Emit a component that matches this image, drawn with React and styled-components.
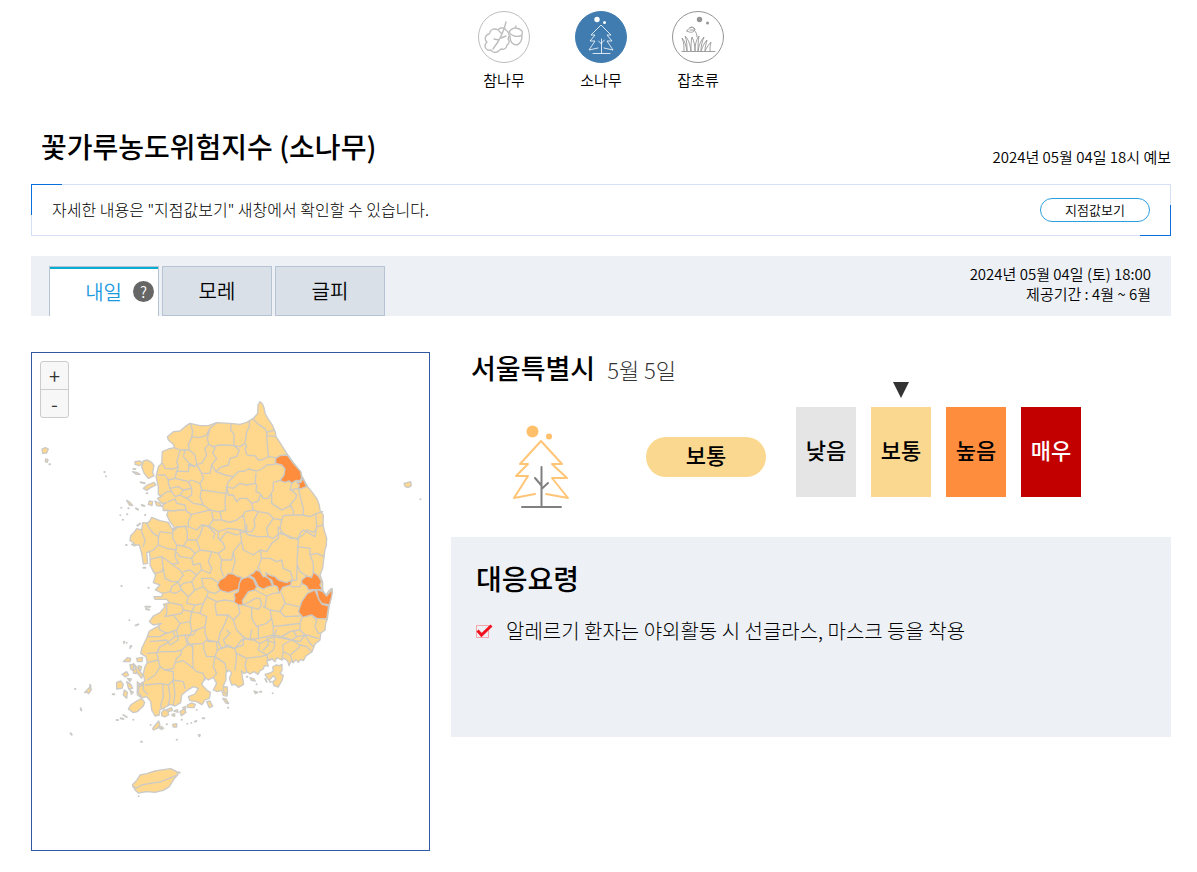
import React, { useState } from "react";
import styled, { createGlobalStyle, css } from "styled-components";

// 꽃가루 종류
const plants = [
  { id: "oak", name: "참나무" },
  { id: "pine", name: "소나무" },
  { id: "weed", name: "잡초류" },
];

const days = ["내일", "모레", "글피"];

// 위험 단계
const levels = [
  { name: "낮음", bg: "#e5e5e5", color: "#000" },
  { name: "보통", bg: "#fad88f", color: "#000" },
  { name: "높음", bg: "#ff8d3e", color: "#000" },
  { name: "매우", bg: "#c30000", color: "#fff" },
];

// 육지 해안선
const mainland =
  "M690 170L697 176 702 188 705 205 715 222 728 242 736 262 738 275 750 293 772 328 790 353 812 380 816 395 822 405 833 425 845 440 860 460 868 480 870 495 880 510 879 540 884 560 890 580 889 600 885 615 882 635 878 670 870 690 878 710 878 735 888 750 896 738 905 730 907 745 900 760 898 780 895 800 892 822 887 835 885 855 872 865 870 885 855 897 846 920 828 933 820 947 812 943 805 952 798 944 790 953 783 948 777 962 773 948 762 940 755 945 740 938 735 950 726 942 710 947 715 963 703 962 700 972 690 977 684 988 672 980 660 987 650 980 643 986 634 977 638 1000 641 1018 625 1027 615 1018 605 1020 598 1000 605 983 597 976 588 982 588 1005 580 1022 593 1037 591 1053 580 1052 575 1036 562 1040 550 1035 560 1015 550 997 535 1005 526 998 515 1018 530 1035 541 1042 538 1060 525 1065 516 1079 500 1070 480 1067 475 1055 495 1047 505 1030 490 1025 470 1037 455 1050 452 1073 435 1083 420 1078 410 1084 402 1090 390 1093 388 1110 375 1113 365 1095 362 1070 350 1055 339 1058 328 1055 322 1040 329 1020 344 1008 340 985 345 965 352 953 348 935 332 925 336 908 352 875 358 858 385 843 395 835 370 840 358 830 370 813 390 803 405 785 400 778 418 773 410 763 375 763 372 755 395 755 398 745 376 735 390 720 370 713 377 690 370 680 360 660 361 645 358 620 350 623 353 655 340 657 335 625 328 600 315 600 308 591 300 587 302 572 312 562 320 551 335 555 338 533 352 534 360 527 365 517 390 527 415 532 425 550 435 550 420 530 410 510 415 497 400 497 398 480 410 473 395 475 382 460 395 455 385 448 385 425 378 395 385 365 395 355 397 320 415 312 433 308 430 298 415 285 412 275 430 260 450 258 465 245 480 235 510 242 535 242 560 233 600 235 630 238 650 232 670 220 683 205 684 180Z";

// 시군구 경계 (북부, 중부, 남부)
const northBorders =
  "M183 88L188 110 184 130 175 148 178 165 195 180 200 208M188 125L205 128 228 122 240 100 260 83M240 100L232 130 236 148 250 155 268 150 290 150 312 152M303 86L302 105 312 118 312 152 330 155 345 145 350 155M358 80L358 95 350 110 345 145M370 72L385 88 405 100 410 112 432 105M410 112L410 122 437 125M410 122L412 150 415 185 395 195 385 195 375 182 360 182 350 178 345 160 350 155M415 185L437 188 472 178M312 152L328 165 320 185 300 190 295 210 270 218 258 230 245 210 260 190 248 175 255 160 250 155M236 148L225 160 230 180 215 205 200 208 195 215 175 210M258 230L285 240 310 245 325 230 345 228 355 222 380 228 395 222 410 210 435 208 437 188M310 245L295 260 290 275 310 280 330 265 350 270 375 265 378 235M245 210L240 235 215 235 200 208M215 235L220 250 210 265 185 255 175 260M462 240L455 255 430 262 430 285 415 310 400 310 390 295 378 290 380 270 375 265M485 265L480 285 505 280M505 280L512 310 520 340 520 360 490 360 490 345 480 330 497 310 500 300 485 285M425 300L425 325 440 335 455 345 475 335 485 335M520 360L540 365 560 355 578 350M490 360L460 362 455 375 430 370 415 355 385 350 370 345 365 325 385 318 390 302M365 325L350 310 330 310 320 320 310 300 295 300 290 275 285 320 287 345 270 350 275 375 300 382 320 375 340 360 345 350 370 345M210 265L215 285 250 290 285 295M215 285L210 305 220 330 240 345 262 350 270 350M85 240L105 240 115 255 135 250 175 260 185 280 160 285 145 275 120 280 115 265 115 255M133 158L150 165 145 185 140 200 145 215 130 222 105 220 98 205M150 165L165 165 178 165M165 165L160 185 178 205 175 230 140 228 145 215M178 205L195 215M140 228L135 250M90 305L110 290 125 290 120 280M125 290L135 305 150 300 160 285M150 300L170 310 185 300 185 280M170 310L190 325 220 330M115 320L135 312 140 325 165 330 170 350 185 358 210 352 240 345M105 345L130 348 150 345 168 345M185 358L175 380 175 395 140 395 128 405M175 395L200 405 215 390 235 395 250 375 245 350M250 375L270 375M235 395L255 415 250 430M340 360L345 385 345 410 320 420 290 410 270 435M345 410L365 410 375 395 372 375 385 350M455 375L450 400 455 410 430 430 415 425 410 400 430 370M345 410L355 420 385 425 415 425M455 410L480 430 500 430 520 420 530 405 550 412 560 400 558 360";

const middleBorders =
  "M218 125L232 112 255 108 262 125 262 150 250 168 230 165 218 145 218 120M125 125L135 150 130 170M140 100L148 115 160 130 175 140 180 125 218 130M175 140L175 165 160 180 148 185M175 165L200 175 228 180 230 165M228 180L225 200 235 220 215 222 200 210 185 200 160 205 150 210M185 200L190 235 185 245 165 250M215 222L240 240 250 255 235 275 215 275 195 265 190 235M262 150L290 150 300 135 310 105 330 110 355 125M290 150L300 180 285 190 270 175 250 168M300 180L335 185 355 190 375 175 370 160 355 145 355 125 385 115 420 120M355 190L365 210 395 210 400 185 425 155 420 120 440 125 440 105M425 155L430 180 460 195 480 180 500 185 515 160 535 145 535 110M400 185L405 215 395 250M480 180L485 205 475 230 480 245M485 205L510 205 530 215 545 210 550 235 572 245 578 270M535 130L560 135 595 150 600 130 610 120 645 140 650 110 670 105M595 150L592 200 590 270 578 272M592 225L600 245 620 258M592 170L630 175 630 195 650 190 672 200M630 195L640 220 640 247M285 190L275 205 280 225 300 220 305 240 290 255 270 240 250 245M275 205L240 200 228 185M305 240L330 250 335 235 325 215 335 185M365 210L362 235 370 258M290 255L275 275 285 300 310 290 305 265 335 265 355 278M310 290L325 305 345 310 360 302M275 275L250 280 240 290 235 275M188 310L210 305 215 290 235 275M210 305L225 310 245 300 240 290M245 300L265 320 285 300M265 320L260 340 285 345 275 365 250 360 245 345 208 338M285 345L310 340 320 320 325 305M310 340L300 370 275 365M320 320L350 335 375 330 402 335M345 345L350 375 385 375 400 390 420 370 415 345M350 335L345 345M430 345L450 335 465 325 480 325 485 345 475 358 455 352 430 345M465 300L500 318 520 310 538 308M500 318L495 350M545 310L555 340 595 350M575 290L600 290 608 275M555 340L540 365 510 360 490 350M540 365L555 380 600 378M510 360L515 385 500 400 470 410 455 385 455 352M200 345L200 370 195 380 220 375 245 370 250 360M220 375L240 400 230 420 200 430 180 420 175 408M240 400L270 395 275 365M270 395L275 425 260 450 275 470M300 370L320 380 315 410 290 420 275 425M385 375L375 400 360 430 355 455 325 455 315 430 315 410M400 390L410 420 430 440 450 450 475 445 475 410M515 385L520 410 560 405 600 400 605 385M520 410L520 435 545 440 570 425 600 420 600 400M640 380L650 390 645 410 655 430 662 430M600 420L615 435 600 455 575 450 545 440M475 445L500 440 520 435M500 440L505 465 490 480M230 420L235 450 210 465 200 450 150 455M355 455L365 475 385 465 400 475 430 465 430 440M615 435L630 460 640 470";

const southBorders =
  "M262 20L300 20 320 8M262 70L290 68 300 50 320 40 345 20 340 5M345 20L375 15 382 45 365 60 345 65 310 65 290 68 295 90 262 98M382 45L400 42 430 40 440 30 470 35 472 60 465 80 440 80 432 60 430 40M375 15L400 15 410 0M398 42L398 80 400 115 370 92 345 98 340 115 315 120 300 110 295 90M345 98L350 85 362 75 365 60M315 120L340 125 340 150 325 165 300 160 256 165M300 110L285 135 262 150M340 150L370 155 375 175M400 115L410 125 430 130 435 150M308 165L310 200 302 225 305 235M325 165L330 200 325 225M340 155L345 190 340 225M465 80L495 100 500 125M465 80L460 110 470 130 460 142M472 60L500 50 525 55 530 80 525 120M500 50L490 30 510 10 500 0M530 70L560 85 600 80 620 75 625 92 640 86M560 85L555 105 560 125M525 55L545 30 570 25 600 40 595 60 620 75M570 25L575 0M600 40L620 30 645 40 640 60 620 75M645 40L640 20 650 0M620 30L640 20 670 25 695 30 710 20 700 0M695 30L720 45 715 55 690 75 670 65 668 45 695 30M690 75L700 98M720 45L740 50 755 65M710 20L740 15 775 25M670 65L665 90M250 160L250 180 262 192";

// "높음" 지역
const highNorth =
  "M437 190L450 182 472 180 490 205 512 230 515 250 508 258 498 256 485 265 478 258 465 262 450 257 462 240 465 222 455 210 437 205ZM500 262L513 262 518 248 524 262 530 275 515 280 505 282 508 270Z";

const highMiddle =
  "M352 285L360 270 372 264 385 250 400 252 410 258 425 262 418 280 415 298 400 303 385 308 370 304 360 300ZM425 267L445 260 460 268 470 290 465 300 445 305 435 320 427 332 430 345 415 345 402 335 405 325 402 312 415 305 418 280ZM447 255L460 250 468 240 480 245 490 260 500 260 510 270 518 288 505 290 490 297 475 290 462 265ZM497 248L510 256 525 260 535 270 560 278 575 270 572 285 548 292 538 310 532 290 520 285 515 270 500 262ZM605 270L620 258 635 262 640 247 655 258 665 275 660 285 668 300 650 298 625 300 620 288 605 280ZM650 298L668 305 680 318 697 297 695 320 688 345 665 340 655 325ZM622 310L645 300 655 325 665 342 686 348 680 387 650 385 635 375 608 382 595 365 600 350 605 335Z";

// 섬
const islands = [
  "M340 348L352 345 365 352 372 362 368 382 372 393 355 400 343 386 335 365Z",
  "M315 350L330 348 338 354 328 362 315 358ZM308 380L320 382 330 388 318 388ZM340 430L352 420 372 412 378 420 362 428 350 436Z",
  "M358 468L368 470 366 482 355 478ZM375 468L388 474 396 484 380 482Z",
  "M290 466L300 472 308 482 298 480Z",
  "M36 312L46 308 55 312 50 324 38 325ZM47 342L54 344 52 352 46 350Z",
  "M1122 415L1142 410 1144 422 1134 428 1125 424Z",
  "M295 1092L302 1080 320 1068 335 1060 344 1072 340 1083 322 1100 310 1103Z",
  "M322 1010L330 1020 324 1040 335 1055 322 1050ZM325 1022L337 1012 337 1022Z",
  "M280 950L292 938 302 940 300 950ZM300 958L312 960 308 976 302 972ZM320 940L338 937 336 950 322 950Z",
  "M276 988L290 980 296 990 286 996ZM310 972L322 974 318 986 310 984ZM325 962L335 965 332 976 326 972Z",
  "M260 1012L272 1008 280 1018 276 1030 260 1032ZM290 1010L302 1018 308 1030 296 1032ZM283 1035L292 1042 290 1060 280 1050ZM300 1035L310 1042 304 1048ZM292 1000L304 1002 300 1010ZM310 955L322 968 338 990 335 1000 322 984Z",
  "M395 1102L402 1094 414 1098 416 1110 404 1116 395 1112ZM410 1094L424 1088 428 1096 416 1100ZM426 1108L434 1106 434 1114 426 1112ZM432 1098L442 1094 444 1102ZM450 1100L462 1092 468 1102 454 1112ZM458 1088L468 1084 466 1094Z",
  "M472 1080L484 1074 496 1078 492 1088 474 1088Z",
  "M368 1150L376 1140 386 1128 390 1140 382 1150 370 1155ZM386 1148L396 1144 396 1154ZM428 1138L440 1136 440 1146 430 1146Z",
  "M530 1070L540 1068 548 1084 538 1088ZM578 1060L588 1062 596 1076 588 1074Z",
  "M705 988L720 984 730 978 728 966 738 960 748 962 756 958 756 976 750 985 760 992 755 1008 745 1026 732 1022 728 1010 738 1002 730 992 718 1006 712 1000Z",
  "M580 1026L592 1026 592 1048 582 1042ZM660 998L672 1002 676 1008 664 1006ZM672 1038L684 1042 676 1046Z",
  "M168 1038L180 1026 184 1034 176 1046Z",
  "M307 1320L320 1306 330 1290 350 1286 375 1278 400 1274 422 1271 440 1280 444 1288 432 1302 418 1325 400 1336 375 1342 350 1340 325 1344 316 1336Z",
];

const islets =
  "M58 358h2M223 381h1M228 394h0M274 488h0M271 511h0M278 524h1M291 508h1M295 490h1M318 490l6 4M335 480l8 3M345 510h1M310 372h6M332 412l12 3M350 445h2M288 600h2M306 598l8 4M330 536l-8 6M340 668h6M274 723h1M355 728h1M346 785l14 0M348 792l10 2M298 826h0M325 838l-8 3M282 890h1M304 903l-4 6M290 893h0M302 903h0M282 894h0M135 1032h1M180 1020l2 6M165 1042h3M248 1048h5M152 1090l2 6M122 1165l3 4M260 1125h4M272 1120l8 2M280 1110l10 6M310 1124h0M333 1190h3M410 1138h1M440 1184h1M506 1170h4M508 1174h0M455 1124h1M472 1136h0M484 1134h0M495 1130l4-2M500 1095h0M518 1120h5M362 1140h0M594 1088h1M650 995h2M680 1018h0M690 1040h4M728 1045h0M445 1282l4 1M326 1354h0M400 1150h0M706 1002l4 8M720 1010h3M1171 463h0";

const App = () => {
  const [day, setDay] = useState(0);
  const [plant, setPlant] = useState("pine");

  return (
    <Wrap>
      <GlobalStyle />
      <PlantNav>
        {plants.map((item) => (
          <PlantButton key={item.id} type="button" onClick={() => setPlant(item.id)}>
            <PlantIcon id={item.id} active={plant === item.id} />
            <span>{item.name}</span>
          </PlantButton>
        ))}
      </PlantNav>

      <TitleRow>
        <h1>꽃가루농도위험지수 (소나무)</h1>
        <p>2024년 05월 04일 18시 예보</p>
      </TitleRow>

      <InfoBox>
        <p>자세한 내용은 "지점값보기" 새창에서 확인할 수 있습니다.</p>
        <PointButton type="button">지점값보기</PointButton>
      </InfoBox>

      <TabBar>
        <Tabs>
          {days.map((name, index) => (
            <Tab key={name} type="button" $active={day === index} onClick={() => setDay(index)}>
              {name}
              {index === 0 && <Help>?</Help>}
            </Tab>
          ))}
        </Tabs>
        <Period>
          <p>2024년 05월 04일 (토) 18:00</p>
          <p>제공기간 : 4월 ~ 6월</p>
        </Period>
      </TabBar>

      <Content>
        <MapPanel>
          <KoreaMap />
          <ZoomControl>
            <button type="button" aria-label="확대">+</button>
            <button type="button" aria-label="축소">-</button>
          </ZoomControl>
        </MapPanel>

        <Detail>
          <CityTitle>
            서울특별시 <span>5월 5일</span>
          </CityTitle>
          <Status>
            <TreeCell>
              <BigTree />
            </TreeCell>
            <Pill>보통</Pill>
            <Levels>
              {levels.map((level) => (
                <Level key={level.name} $bg={level.bg} $color={level.color}>
                  {level.name === "보통" && <Marker />}
                  {level.name}
                </Level>
              ))}
            </Levels>
          </Status>
          <Guide>
            <h2>대응요령</h2>
            <ul>
              <li>
                <CheckMark />
                알레르기 환자는 야외활동 시 선글라스, 마스크 등을 착용
              </li>
            </ul>
          </Guide>
        </Detail>
      </Content>
    </Wrap>
  );
};

export default App;

const PlantIcon = ({ id, active }) => {
  const stroke = active ? "#fff" : id === "oak" ? "#bdbdbd" : "#959595";
  return (
    <svg width="52" height="52" viewBox="0 0 52 52" fill="none" stroke={stroke} strokeLinecap="round" strokeLinejoin="round">
      <circle cx="26" cy="26" r="25.5" fill={active ? "#417cb0" : "#fff"} stroke={active ? "#417cb0" : stroke} />
      {id === "oak" && (
        <g strokeWidth="1.4">
          <path d="M28 19c-2-3-6-3-8 0-3-2-7-1-8 2 0 1 0 1-1 2-4 1-5 6-2 8-1 1-2 2-2 4 0 3 3 5 6 4 1 2 3 3 6 2 2-1 3-2 4-3 3 1 6-1 6-4 2-1 3-4 1-6 2-3 1-7-2-9z" />
          <path d="M28 11C26 20 22 29 15 38M24 23l-3-3M21 29l-5-1M23 27l5-2" />
          <path d="M31 21c2-4 8-6 13-1 1 2 0 5-2 5-4 1-9 0-11-4zM37 17l1-2M32 25c0 5 2 9 7 9 4-2 5-5 5-9" />
        </g>
      )}
      {id === "pine" && (
        <g>
          <circle cx="22" cy="8.500" r="2.700" fill={stroke} stroke="none" />
          <circle cx="29.500" cy="11.500" r="1.500" fill={stroke} stroke="none" />
          <path d="M23 37l-9 2 6-9h-5l5-6h-4l10-10 10 10h-4l5 6h-5l6 9-9-2M26.500 28v14M26.500 33l-3-3M26.500 32l3-3M18 42.500h17" strokeWidth="0.800" />
        </g>
      )}
      {id === "weed" && (
        <g strokeWidth="0.900">
          <circle cx="27.500" cy="8.500" r="2.700" fill={stroke} stroke="none" />
          <circle cx="35.500" cy="12" r="1.500" fill={stroke} stroke="none" />
          <path d="M10 40.500h33M12 40c0-5 0-8-2-13 3 3 4 8 5 13 0-6 0-10-2-15 4 4 5 9 6 15 0-6 0-10 1-14 2 4 3 9 3 14 0-6 1-11 4-15-1 5-1 10-1 15 1-6 3-11 6-14-2 5-3 9-3 14 2-5 3-8 6-11-1 4-2 7-2 11 2-4 4-7 6-9-1 3-1 6-1 9" />
          <path d="M15 20c2-4 5-5 8-2-1 4-5 4-8 2zM18 19l4 0c2 2 3 4 3 7M18 17l2-1 3 2" />
        </g>
      )}
    </svg>
  );
};

const BigTree = () => (
  <svg width="60" height="88" viewBox="0 0 60 88" fill="none" strokeLinejoin="round" strokeLinecap="round">
    <circle cx="21.500" cy="7.500" r="6" fill="#ffbf6b" />
    <circle cx="38" cy="12.500" r="3" fill="#ffbf6b" />
    <path
      d="M24 70L3 74 17 52H5L17 40H9L30 17 51 40H41L56 54H41L57 74 35 70"
      stroke="#ffc577"
      strokeWidth="2"
    />
    <path d="M30.500 43V83M24 54L30 61M30.500 65L37 59M11 83H50" stroke="#808080" strokeWidth="2" />
  </svg>
);

const CheckMark = () => (
  <svg width="17" height="16" viewBox="0 0 17 16" fill="none">
    <rect x="0.500" y="2.500" width="12" height="12" stroke="#f5a6ab" />
    <path d="M1.500 7.500L5.500 12 15.500 2.500" stroke="#f0141e" strokeWidth="3" />
  </svg>
);

const KoreaMap = () => (
  <MapSvg viewBox="6 24 1191 1491" role="img" aria-label="전국 꽃가루농도위험지수 지도">
    <path d={mainland} />
    {islands.map((d) => (
      <path key={d} d={d} />
    ))}
    <g transform="translate(300 150)">
      <path d={northBorders} fill="none" />
      <path d={highNorth} fill="#ff8d3e" />
    </g>
    <g transform="translate(210 435)">
      <path d={middleBorders} fill="none" />
      <path d={highMiddle} fill="#ff8d3e" />
    </g>
    <g transform="translate(90 855)">
      <path d={southBorders} fill="none" />
      <path d="M218 470L230 474 245 465 270 460 300 456 320 448 350 436" fill="none" />
    </g>
    <path d={islets} fill="none" strokeWidth="6" />
  </MapSvg>
);

const GlobalStyle = createGlobalStyle`
  * {
    box-sizing: border-box;
  }
  body {
    margin: 0;
    background: #fff;
    color: #000;
    font-family: "Noto Sans CJK KR", "Noto Sans", sans-serif;
    font-size: 15px;
    font-weight: 350;
  }
  h1, h2, p, ul {
    margin: 0;
    padding: 0;
  }
  button {
    font-family: inherit;
    font-weight: inherit;
    color: inherit;
    padding: 0;
    cursor: pointer;
  }
`;

const Wrap = styled.div`
  padding: 11px 26px 20px 31px;
`;

const PlantNav = styled.nav`
  display: flex;
  justify-content: center;
  gap: 45px;
`;

const PlantButton = styled.button`
  width: 52px;
  display: flex;
  flex-direction: column;
  align-items: center;
  gap: 7px;
  border: none;
  background: none;
  font-size: 15px;
  line-height: 20px;
`;

const TitleRow = styled.header`
  display: flex;
  justify-content: space-between;
  align-items: flex-end;
  margin-top: 36px;
  padding-left: 10px;
  padding-bottom: 18px;
  h1 {
    font-size: 28px;
    font-weight: 500;
    line-height: 40px;
  }
  p {
    font-size: 15px;
    line-height: 18px;
  }
`;

const InfoBox = styled.section`
  position: relative;
  display: flex;
  justify-content: space-between;
  align-items: center;
  height: 52px;
  padding: 0 20px;
  border: 1px solid #d5e0f7;
  p {
    padding-bottom: 3px;
    font-size: 16px;
    font-weight: 300;
  }
  /* 모서리 강조선 */
  &::before,
  &::after {
    content: "";
    position: absolute;
    width: 30px;
    height: 30px;
    pointer-events: none;
  }
  &::before {
    top: -1px;
    left: -1px;
    border-top: 1px solid #0a6fdc;
    border-left: 1px solid #0a6fdc;
  }
  &::after {
    right: -1px;
    bottom: -1px;
    border-right: 1px solid #0a6fdc;
    border-bottom: 1px solid #0a6fdc;
  }
`;

const PointButton = styled.button`
  width: 110px;
  height: 24px;
  border: 1px solid #2a9fdc;
  border-radius: 12px;
  background: #fff;
  font-size: 13px;
  line-height: 20px;
`;

const TabBar = styled.div`
  display: flex;
  justify-content: space-between;
  align-items: flex-end;
  height: 60px;
  margin-top: 20px;
  padding: 0 20px 0 18px;
  background: #edf1f6;
`;

const Tabs = styled.div`
  display: flex;
  gap: 3px;
`;

const Tab = styled.button`
  display: flex;
  justify-content: center;
  align-items: center;
  gap: 11px;
  width: 110px;
  height: 50px;
  padding-bottom: 1px;
  border: 1px solid #b5c3d2;
  background: #d9e0e8;
  font-size: 20px;
  ${({ $active }) =>
    $active &&
    css`
      justify-content: flex-end;
      padding-right: 4px;
      border-bottom: none;
      background: #fff;
      box-shadow: inset 0 2px #09abd0;
      color: #1e9be0;
    `}
`;

const Help = styled.span`
  width: 21px;
  height: 21px;
  border-radius: 50%;
  background: #666;
  color: #fff;
  font-size: 15px;
  line-height: 21px;
  text-align: center;
`;

const Period = styled.div`
  align-self: flex-start;
  padding-top: 8px;
  font-size: 15px;
  line-height: 20px;
  text-align: right;
`;

const Content = styled.main`
  display: flex;
  align-items: flex-start;
  gap: 21px;
  margin-top: 36px;
`;

const MapPanel = styled.section`
  position: relative;
  width: 35%;
  border: 1px solid #3059a4;
`;

const MapSvg = styled.svg`
  display: block;
  width: 100%;
  fill: #ffd78d;
  stroke: #cbcac6;
  stroke-width: 4px;
  stroke-linejoin: round;
  stroke-linecap: round;
`;

const ZoomControl = styled.div`
  position: absolute;
  top: 8px;
  left: 8px;
  display: flex;
  flex-direction: column;
  border: 1px solid #ccc;
  border-radius: 3px;
  background: #f7f7f7;
  button {
    width: 27px;
    height: 27px;
    border: none;
    background: none;
    color: #333;
    font-size: 20px;
    line-height: 27px;
  }
  button + button {
    height: 28px;
    border-top: 1px solid #ccc;
  }
`;

const Detail = styled.section`
  flex: 1;
`;

const CityTitle = styled.h2`
  display: flex;
  align-items: baseline;
  gap: 12px;
  height: 34px;
  padding-left: 20px;
  font-size: 27px;
  font-weight: 500;
  line-height: 32px;
  span {
    font-size: 22px;
    font-weight: 300;
    color: #333;
  }
`;

const Status = styled.div`
  display: flex;
  align-items: flex-start;
  height: 130px;
  margin-top: 21px;
`;

const TreeCell = styled.div`
  width: 25%;
  padding-top: 17px;
  text-align: center;
`;

const Pill = styled.strong`
  width: 120px;
  margin: 30px 30px 0 15px;
  padding-bottom: 6px;
  border-radius: 20px;
  background: #fad88f;
  font-size: 22px;
  font-weight: 500;
  line-height: 34px;
  text-align: center;
`;

const Levels = styled.div`
  display: flex;
  gap: 15px;
`;

const Level = styled.div`
  position: relative;
  width: 60px;
  padding-bottom: 6px;
  background: ${({ $bg }) => $bg};
  color: ${({ $color }) => $color};
  font-size: 22px;
  font-weight: 500;
  line-height: 84px;
  text-align: center;
`;

const Marker = styled.i`
  position: absolute;
  top: -25px;
  left: 22px;
  border: 8px solid transparent;
  border-top: 16px solid #333;
  border-bottom: none;
`;

const Guide = styled.section`
  min-height: 200px;
  padding: 21px 25px;
  background: #edf1f6;
  h2 {
    font-size: 28px;
    font-weight: 500;
    line-height: 40px;
  }
  ul {
    margin-top: 19px;
    list-style: none;
  }
  li {
    display: flex;
    align-items: center;
    gap: 13px;
    font-size: 20px;
    font-weight: 300;
    line-height: 28px;
  }
`;
